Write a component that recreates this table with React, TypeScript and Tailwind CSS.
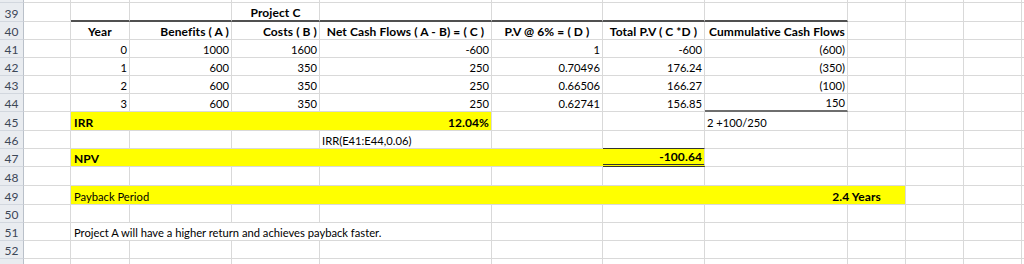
import React from "react";

const GRID =
  "grid grid-cols-[24px_47px_59px_102px_88px_172px_111px_102px_143px_58px_58px_58px_2px]";

const GRIDLINE_R = "border-r border-r-[#d9d9d9]";
const GRIDLINE_B = "border-b border-b-[#d9d9d9]";

type CellProps = {
  cls?: string;
  r?: string;
  b?: string;
  children?: React.ReactNode;
};

function Cell({ cls = "", r = GRIDLINE_R, b = GRIDLINE_B, children }: CellProps) {
  return (
    <div className={`flex items-end whitespace-nowrap px-[2px] leading-[14px] ${r} ${b} ${cls}`}>
      {children}
    </div>
  );
}

function Row({ n, h, children }: { n?: number; h: string; children?: React.ReactNode }) {
  return (
    <div className={`${GRID} ${h}`}>
      <div className="flex items-end justify-center border-r border-r-[#b9c0c9] border-b border-b-[#d2d7de] bg-[#e9ecf0] text-[12px] leading-[15px] text-[#3c4757]">
        {n}
      </div>
      {children}
    </div>
  );
}

// empty cells for the rest of a row
function Blank({ count }: { count: number }) {
  return (
    <>
      {Array.from({ length: count }).map((_, i) => (
        <Cell key={i} />
      ))}
    </>
  );
}

const data = [
  { n: 41, y: "0", a: "1000", b: "1600", c: "-600", d: "1", t: "-600", cum: "(600)" },
  { n: 42, y: "1", a: "600", b: "350", c: "250", d: "0.70496", t: "176.24", cum: "(350)" },
  { n: 43, y: "2", a: "600", b: "350", c: "250", d: "0.66506", t: "166.27", cum: "(100)" },
  { n: 44, y: "3", a: "600", b: "350", c: "250", d: "0.62741", t: "156.85", cum: "150" },
];

const HEAD_B = "border-b-2 border-b-[#505050]";
const BOLD = "font-bold text-[12px] tracking-[0.1px]";

export default function App() {
  return (
    <div className="w-[1024px] h-[264px] overflow-hidden bg-white text-[11.2px] text-black font-['Lato','Liberation_Sans',sans-serif]">
      <Row h="h-[3px]">
        <Blank count={12} />
      </Row>

      <Row n={39} h="h-[19px]">
        <Cell />
        <Cell b={HEAD_B} />
        <Cell b={HEAD_B} />
        <Cell b={HEAD_B} cls={`justify-center ${BOLD}`}>Project C</Cell>
        <Cell b={HEAD_B} />
        <Cell b={HEAD_B} />
        <Cell b={HEAD_B} />
        <Cell b={HEAD_B} />
        <Blank count={4} />
      </Row>

      <Row n={40} h="h-[18px]">
        <Cell />
        <Cell cls={`justify-center ${BOLD}`}>Year</Cell>
        <Cell cls={`justify-end ${BOLD}`}>Benefits ( A )</Cell>
        <Cell cls={`justify-end ${BOLD}`}>Costs ( B )</Cell>
        <Cell cls={`justify-center ${BOLD}`}>Net Cash Flows ( A - B) = ( C )</Cell>
        <Cell cls={`justify-center ${BOLD}`}>P.V @ 6% = ( D )</Cell>
        <Cell cls={`justify-center ${BOLD}`}>Total P.V ( C *D )</Cell>
        <Cell cls={`justify-end ${BOLD}`}>Cummulative Cash Flows</Cell>
        <Blank count={4} />
      </Row>

      {data.map((d) => (
        <Row key={d.n} n={d.n} h="h-[18px]">
          <Cell />
          <Cell cls="justify-end">{d.y}</Cell>
          <Cell cls="justify-end">{d.a}</Cell>
          <Cell cls="justify-end">{d.b}</Cell>
          <Cell cls="justify-end">{d.c}</Cell>
          <Cell cls="justify-end">{d.d}</Cell>
          <Cell cls="justify-end">{d.t}</Cell>
          <Cell
            cls="justify-end"
            b={d.n === 44 ? "border-b-2 border-b-[#6e6e6e]" : GRIDLINE_B}
          >
            {d.cum}
          </Cell>
          <Blank count={4} />
        </Row>
      ))}

      <Row n={45} h="h-[19px]">
        <Cell />
        <Cell cls={`col-span-4 justify-between bg-[#ffff00] pl-[3px] ${BOLD}`}>
          <span>IRR</span>
          <span>12.04%</span>
        </Cell>
        <Cell />
        <Cell />
        <Cell>2 +100/250</Cell>
        <Blank count={4} />
      </Row>

      <Row n={46} h="h-[18px]">
        <Cell />
        <Cell />
        <Cell />
        <Cell />
        <Cell>IRR(E41:E44,0.06)</Cell>
        <Cell />
        <Cell b="border-b border-b-[#333333]" />
        <Blank count={5} />
      </Row>

      <Row n={47} h="h-[18px]">
        <Cell />
        <Cell r="border-r-0" cls={`col-span-5 bg-[#ffff00] pl-[3px] ${BOLD}`}>NPV</Cell>
        <Cell
          b="border-b-[3px] border-double border-b-[#333333]"
          cls={`justify-end bg-[#ffff00] ${BOLD}`}
        >
          -100.64
        </Cell>
        <Blank count={5} />
      </Row>

      <Row n={48} h="h-[19px]">
        <Blank count={12} />
      </Row>

      <Row n={49} h="h-[19px]">
        <Cell />
        <Cell cls="col-span-8 justify-between bg-[#ffff00] pl-[3px] pr-[24px]">
          <span>Payback Period</span>
          <span className={BOLD}>2.4 Years</span>
        </Cell>
        <Blank count={3} />
      </Row>

      <Row n={50} h="h-[18px]">
        <Blank count={12} />
      </Row>

      <Row n={51} h="h-[18px]">
        <Cell />
        <Cell cls="col-span-4 pl-[3px]">
          Project A will have a higher return and achieves payback faster.
        </Cell>
        <Blank count={7} />
      </Row>

      <Row n={52} h="h-[18px]">
        <Blank count={12} />
      </Row>

      <Row h="h-[18px]">
        <Blank count={12} />
      </Row>
    </div>
  );
}
